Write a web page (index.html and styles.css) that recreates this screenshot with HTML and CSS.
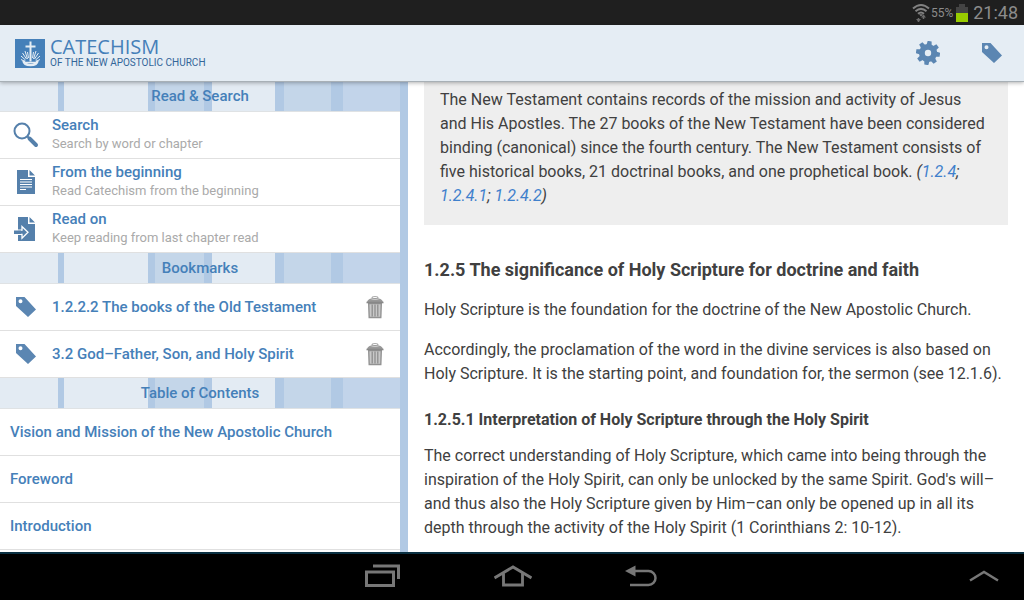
FILE: index.html
```html
<!DOCTYPE html>
<html lang="en">
<head>
    <meta charset="UTF-8">
    <meta name="viewport" content="width=device-width, initial-scale=1.0">
    <title>Catechism of the New Apostolic Church</title>
    <link rel="stylesheet" href="styles.css">
</head>
<body>
    <svg class="defs" aria-hidden="true">
        <symbol id="tag" viewBox="0 0 20 20">
            <path fill-rule="evenodd" d="M0 0h8.5L20 12.5 12 20 0 9zM4.5 2.3a2 2 0 1 0 0 4 2 2 0 0 0 0-4z"/>
        </symbol>
        <symbol id="trash" viewBox="0 0 18 24">
            <path d="M6 3Q6 1.500 9 1.500t3 1.500" fill="none" stroke="#aaa" stroke-width="1.2"/>
            <path d="M1 7Q2 3 9 3t8 4z" fill="#999"/>
            <path d="M4.500 5Q9 3 13.500 5z" fill="#ccc"/>
            <path d="M2.700 8.500h12.600l-.500 14H3.200z" fill="#c8c8c8" stroke="#929292" stroke-width="1.4"/>
            <path d="M6.200 9.500v12M9 9.500v12M11.800 9.500v12" stroke="#8e8e8e" stroke-width="1.3"/>
            <path d="M.5 7.500h17" stroke="#888" stroke-width="1.6"/>
        </symbol>
    </svg>

    <div class="statusbar">
        <svg width="18" height="20" viewBox="0 0 18 20" fill="none" stroke="#828282" stroke-width="2">
            <path d="M1 5.500Q9-1.500 17 5.500M3.500 8.300Q9 3.500 14.500 8.300M6 10.800Q9 8.200 12 10.800" />
            <path d="M7 11.200h4L9 13.500z" fill="#828282" stroke="none"/>
            <path d="M6.500 15v4M11.500 16v-4" stroke="#6c6c6c" stroke-width="1.500"/>
            <path d="M4 16h5l-2.500 3zM9 14.500h5L11.500 11.500z" fill="#6c6c6c" stroke="none"/>
        </svg>
        <span class="percent">55%</span>
        <svg width="12" height="18" viewBox="0 0 12 18">
            <path d="M3 0h6v3h3v6H0V3h3z" fill="#444"/>
            <path d="M0 9h12v9H0z" fill="#99cc00"/>
        </svg>
        <span class="clock">21:48</span>
    </div>

    <header class="header">
        <a class="brand" href="#">
            <svg width="30" height="29" viewBox="0 0 30 29">
                <path d="M0 0h30v29H0z" fill="#4580b9"/>
                <g fill="none" stroke="#e5edf4">
                    <path d="M15.500 2.500v20M10.500 7.500h10" stroke-width="2"/>
                    <path d="M8.500 21.500Q9 26 15.500 26t7-4.500" stroke-width="2.500"/>
                    <path d="M9.500 23.500h12" stroke-width="1.500"/>
                    <path d="M12.500 20 10 12M11.500 20 7.500 14M10.500 21 6 17M9 22l-3-1.500M18.500 20 21 12M19.500 20l4-6M20.500 21l4.500-4M22 22l3-1.500M13.500 19 12.500 13M17.500 19l1-6" stroke-width="1"/>
                </g>
            </svg>
            <span class="brand-text">
                <span class="brand-name">CATECHISM</span>
                <span class="brand-sub">OF THE NEW APOSTOLIC CHURCH</span>
            </span>
        </a>
        <div class="actions">
            <button aria-label="Settings">
                <svg width="24" height="24" viewBox="-12 -12 24 24">
                    <g fill="#5b86b2" transform="rotate(8)">
                        <g id="teeth">
                            <path id="tooth" d="M-2.500-8.500-2-12H2l.500 3.500v17L2 12h-4l-.500-3.500z"/>
                            <use href="#tooth" transform="rotate(90)"/>
                        </g>
                        <use href="#teeth" transform="rotate(45)"/>
                        <circle r="9"/>
                    </g>
                    <circle r="3.200" fill="#e5edf4"/>
                </svg>
            </button>
            <button aria-label="Add bookmark">
                <svg class="tag" width="20" height="20"><use href="#tag"/></svg>
            </button>
        </div>
    </header>

    <div class="panes">
        <nav class="sidebar">
            <h4 class="band">Read &amp; Search</h4>
            <a class="row" href="#">
                <span class="icon">
                    <svg width="26" height="26" viewBox="0 0 26 26" fill="none" stroke="#5580ab">
                        <circle cx="9" cy="9" r="7.500" stroke-width="2"/>
                        <path d="m14 14 3 3" stroke-width="2"/>
                        <path d="m16.500 16.500 6.500 6.500" stroke-width="4" stroke-linecap="round"/>
                    </svg>
                </span>
                <span class="label">Search<small>Search by word or chapter</small></span>
            </a>
            <a class="row" href="#">
                <span class="icon">
                    <svg width="18" height="24" viewBox="0 0 18 24">
                        <path d="M0 0h11v7h7v17H0zM12.500 0 18 5.500h-5.500z" fill="#5580ab"/>
                        <path d="M3 9.500h12M3 12h12M3 14.500h12M3 17h12M3 19.500h6" stroke="#fff" stroke-width="1.200"/>
                    </svg>
                </span>
                <span class="label">From the beginning<small>Read Catechism from the beginning</small></span>
            </a>
            <a class="row" href="#">
                <span class="icon">
                    <svg width="24" height="24" viewBox="0 0 24 24">
                        <path d="M4 0h10v7h7v17H4zM15.500 0 21 5.500h-5.500z" fill="#5580ab"/>
                        <path d="M4 13.200h4V9.500l6 5.800-6 5.800v-3.800H4" fill="#5580ab" stroke="#fff" stroke-width="1.300"/>
                        <path d="M0 13.500h7v3.500H0z" fill="#5580ab"/>
                    </svg>
                </span>
                <span class="label">Read on<small>Keep reading from last chapter read</small></span>
            </a>

            <h4 class="band">Bookmarks</h4>
            <div class="row">
                <span class="icon"><svg class="tag" width="20" height="20"><use href="#tag"/></svg></span>
                <a class="label" href="#">1.2.2.2 The books of the Old Testament</a>
                <button aria-label="Delete bookmark"><svg width="18" height="24"><use href="#trash"/></svg></button>
            </div>
            <div class="row">
                <span class="icon"><svg class="tag" width="20" height="20"><use href="#tag"/></svg></span>
                <a class="label" href="#">3.2 God–Father, Son, and Holy Spirit</a>
                <button aria-label="Delete bookmark"><svg width="18" height="24"><use href="#trash"/></svg></button>
            </div>

            <h4 class="band">Table of Contents</h4>
            <a class="row chapter" href="#">Vision and Mission of the New Apostolic Church</a>
            <a class="row chapter" href="#">Foreword</a>
            <a class="row chapter" href="#">Introduction</a>
        </nav>

        <main class="content">
            <div class="summary">The New Testament contains records of the mission and activity of Jesus and His Apostles. The 27 books of the New Testament have been considered binding (canonical) since the fourth century. The New Testament consists of five historical books, 21 doctrinal books, and one prophetical book. <i>(<a href="#">1.2.4</a>; <a href="#">1.2.4.1</a>; <a href="#">1.2.4.2</a>)</i></div>
            <h2>1.2.5 The significance of Holy Scripture for doctrine and faith</h2>
            <p>Holy Scripture is the foundation for the doctrine of the New Apostolic Church.</p>
            <p>Accordingly, the proclamation of the word in the divine services is also based on Holy Scripture. It is the starting point, and foundation for, the sermon (see 12.1.6).</p>
            <h3>1.2.5.1 Interpretation of Holy Scripture through the Holy Spirit</h3>
            <p>The correct understanding of Holy Scripture, which came into being through the inspiration of the Holy Spirit, can only be unlocked by the same Spirit. God's will–and thus also the Holy Scripture given by Him–can only be opened up in all its depth through the activity of the Holy Spirit (1 Corinthians 2: 10-12).</p>
        </main>
    </div>

    <footer class="navbar">
        <div class="keys">
            <button aria-label="Recent apps">
                <svg width="36" height="24" viewBox="0 0 36 24" fill="none" stroke="#777" stroke-width="3">
                    <path d="M1.500 8h27v13.500h-27zM8 2h25.500v13"/>
                </svg>
            </button>
            <button aria-label="Home">
                <svg width="38" height="24" viewBox="0 0 40 24" fill="none" stroke="#777" stroke-width="3">
                    <path d="M.5 14 20 2.500 39.500 14M10 9v12.500h20V9"/>
                </svg>
            </button>
            <button aria-label="Back">
                <svg width="32" height="22" viewBox="0 0 32 22" fill="none" stroke="#777" stroke-width="2.500">
                    <path d="M9 6h14.500a7 7 0 0 1 0 14H5"/>
                    <path d="M0 6 10.500.500v11z" fill="#777" stroke="none"/>
                </svg>
            </button>
        </div>
        <button class="up" aria-label="Open tray">
            <svg width="30" height="12" viewBox="0 0 30 12" fill="none" stroke="#777" stroke-width="2.500">
                <path d="M1 10.500 15 2l14 8.500"/>
            </svg>
        </button>
    </footer>
</body>
</html>
```
FILE: styles.css
```css
* {
    box-sizing: border-box;
}

body {
    display: flex;
    flex-direction: column;
    height: 100vh;
    margin: 0;
    overflow: hidden;
    font-family: Roboto, sans-serif;
    color: #404040;
    background: white;
}

svg {
    display: block;
}

button {
    padding: 0;
    border: none;
    background: none;
    cursor: pointer;
}

a {
    color: #4580b9;
    text-decoration: none;
}

.defs {
    position: absolute;
    width: 0;
    height: 0;
}

.tag {
    fill: #5b86b2;
}

/* status bar */
.statusbar {
    display: flex;
    flex: none;
    justify-content: flex-end;
    align-items: center;
    height: 25px;
    padding-right: 6px;
    background: #1f1f1f;
    color: #8c8c8c;
}

.percent {
    margin: 0 3px 0 1px;
    font-size: 12px;
}

.clock {
    margin-left: 5px;
    font-size: 18px;
}

/* header */
.header {
    display: flex;
    flex: none;
    justify-content: space-between;
    align-items: center;
    position: relative;
    height: 56px;
    padding: 0 22px 0 15px;
    background: #e5edf4;
    box-shadow: 0 1px 0 #a8b0b6, 0 2px 4px rgba(0,0,0,0.3);
}

.brand {
    display: flex;
    align-items: center;
    gap: 5px;
}

.brand-text {
    display: flex;
    flex-direction: column;
    font-family: "Open Sans", sans-serif;
    white-space: nowrap;
}

.brand-name {
    font-size: 20px;
    line-height: 20px;
}

.brand-sub {
    font-family: Roboto, sans-serif;
    font-size: 10px;
    line-height: 12px;
    color: #336699;
}

.actions {
    display: flex;
    align-items: center;
    gap: 42px;
}

/* panes */
.panes {
    display: flex;
    flex: 1;
    min-height: 0;
}

.sidebar {
    flex: none;
    width: 408px;
    border-right: 8px solid #b1c9e4;
    overflow: hidden;
}

.band {
    height: 31px;
    margin: 0;
    border-bottom: 1px solid #dfe2e4;
    background: linear-gradient(90deg, #e3ebf3 58px, #b1c9e4 58px 64px, #e3ebf3 64px 148px, #b1c9e4 148px 155px, #c4d6e9 155px 204px, #b1c9e4 204px 212px, #e3ebf3 212px 275px, #b1c9e4 275px 284px, #c4d6e9 284px 331px, #b1c9e4 331px 343px, #c2d4ea 343px);
    color: #4580b9;
    font-size: 15px;
    font-weight: 500;
    line-height: 30px;
    text-align: center;
}

.row {
    display: flex;
    align-items: center;
    height: 47px;
    padding-right: 16px;
    border-bottom: 1px solid #e0e0e0;
    color: #4580b9;
    font-size: 15px;
    font-weight: 500;
}

.icon {
    display: flex;
    justify-content: center;
    width: 52px;
}

.label {
    flex: 1;
}

.label small {
    display: block;
    margin: 2px 0 3px;
    color: #aaa;
    font-size: 13px;
    font-weight: 400;
    line-height: 15px;
}

.chapter {
    padding-left: 10px;
}

/* text */
.content {
    flex: 1;
    min-width: 0;
    padding: 0 16px;
    overflow: hidden;
    font-size: 16px;
    line-height: 24px;
}

.summary {
    padding: 7px 20px 17px 16px;
    background: #eee;
}

.summary a {
    color: #3f80cc;
}

.content h2 {
    margin: 33px 0 16px;
    font-size: 18px;
    font-weight: 700;
    line-height: 24px;
}

.content h3 {
    margin: 22px 0 12px;
    font-size: 16px;
    font-weight: 700;
}

.content p {
    margin: 0 0 16px;
}

/* system buttons */
.navbar {
    display: flex;
    flex: none;
    align-items: center;
    height: 48px;
    padding: 0 25px 2px 365px;
    background: black;
    border-top: 2px solid #0a3042;
}

.keys {
    display: flex;
    flex: 1;
    align-items: center;
    gap: 93px;
}
```
